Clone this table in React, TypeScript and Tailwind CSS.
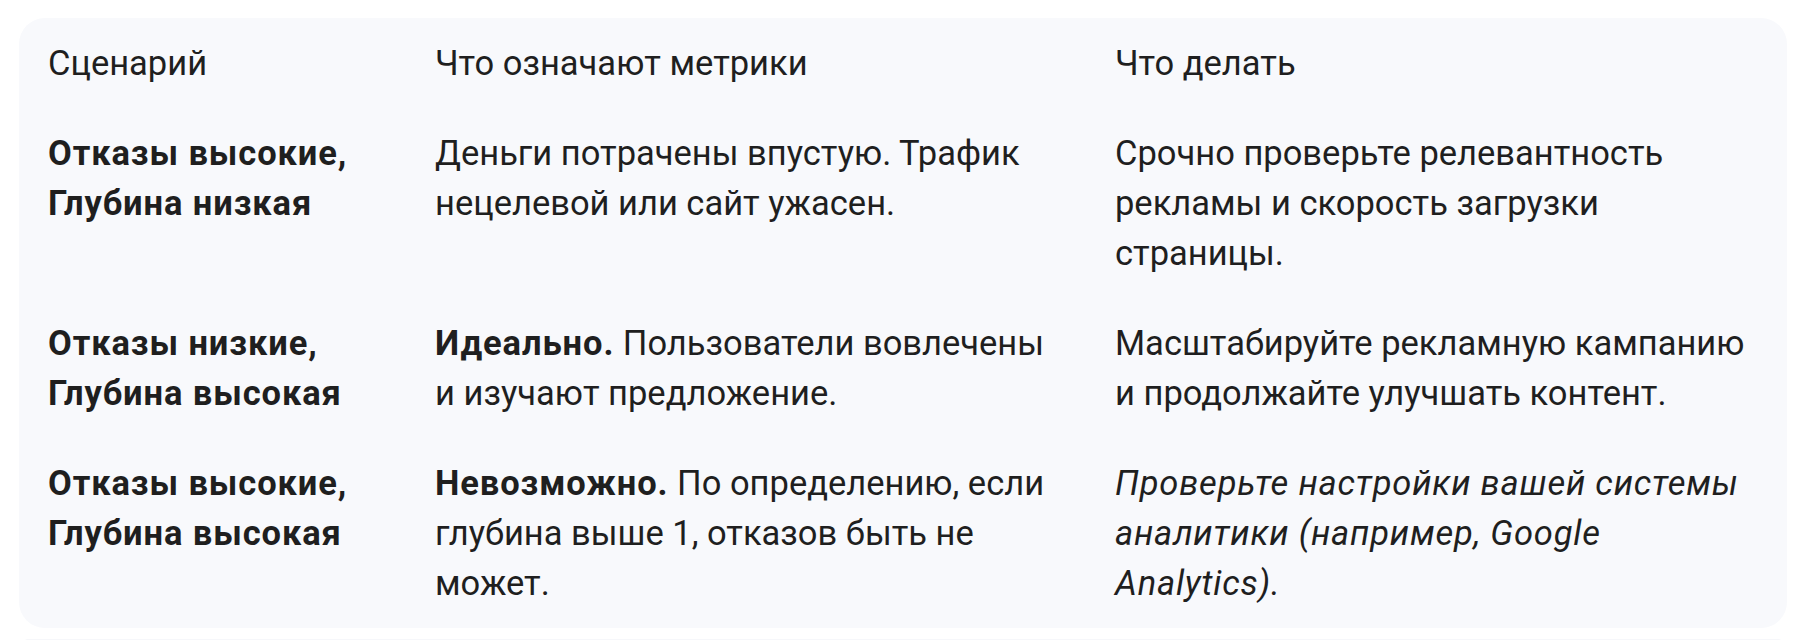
import React from "react";

const font = { fontFamily: "Roboto, 'Noto Sans', sans-serif" };

type Row = { a: React.ReactNode; b: React.ReactNode; c: React.ReactNode };

const rows: Row[] = [
  {
    a: (
      <>
        Отказы высокие,
        <br />
        Глубина низкая
      </>
    ),
    b: (
      <>
        Деньги потрачены впустую. Трафик
        <br />
        нецелевой или сайт ужасен.
      </>
    ),
    c: (
      <>
        Срочно проверьте релевантность
        <br />
        рекламы и скорость загрузки
        <br />
        страницы.
      </>
    ),
  },
  {
    a: (
      <>
        Отказы низкие,
        <br />
        Глубина высокая
      </>
    ),
    b: (
      <>
        <strong className="font-bold tracking-[0.9px]">Идеально.</strong> Пользователи вовлечены
        <br />
        и изучают предложение.
      </>
    ),
    c: (
      <>
        Масштабируйте рекламную кампанию
        <br />
        и продолжайте улучшать контент.
      </>
    ),
  },
  {
    a: (
      <>
        Отказы высокие,
        <br />
        Глубина высокая
      </>
    ),
    b: (
      <>
        <strong className="font-bold tracking-[0.9px]">Невозможно.</strong> По определению, если
        <br />
        глубина выше 1, отказов быть не
        <br />
        может.
      </>
    ),
    c: (
      <em className="italic tracking-[0.8px]">
        Проверьте настройки вашей системы
        <br />
        аналитики (например, Google
        <br />
        Analytics).
      </em>
    ),
  },
];

export default function App() {
  return (
    <div className="w-[1806px] h-[640px] bg-white overflow-hidden pt-[18px]" style={font}>
      <div className="mx-[19px] rounded-[26px] bg-[#f8f9fc] pl-[29px] pr-[20px] text-[#1f1f1f] text-[34.5px] leading-[50px] whitespace-nowrap">
        <div className="grid grid-cols-[387px_680px_1fr]">
          <div className="py-5">Сценарий</div>
          <div className="py-5">Что означают метрики</div>
          <div className="py-5">Что делать</div>
        </div>
        {rows.map((r, i) => (
          <div key={i} className="grid grid-cols-[387px_680px_1fr]">
            <div className="py-5 font-bold tracking-[0.9px]">{r.a}</div>
            <div className="py-5">{r.b}</div>
            <div className="py-5">{r.c}</div>
          </div>
        ))}
      </div>
      <div className="mx-[24px] mt-[11px] h-[4px] rounded-t-[20px] bg-[#f6f7fa]" />
    </div>
  );
}
